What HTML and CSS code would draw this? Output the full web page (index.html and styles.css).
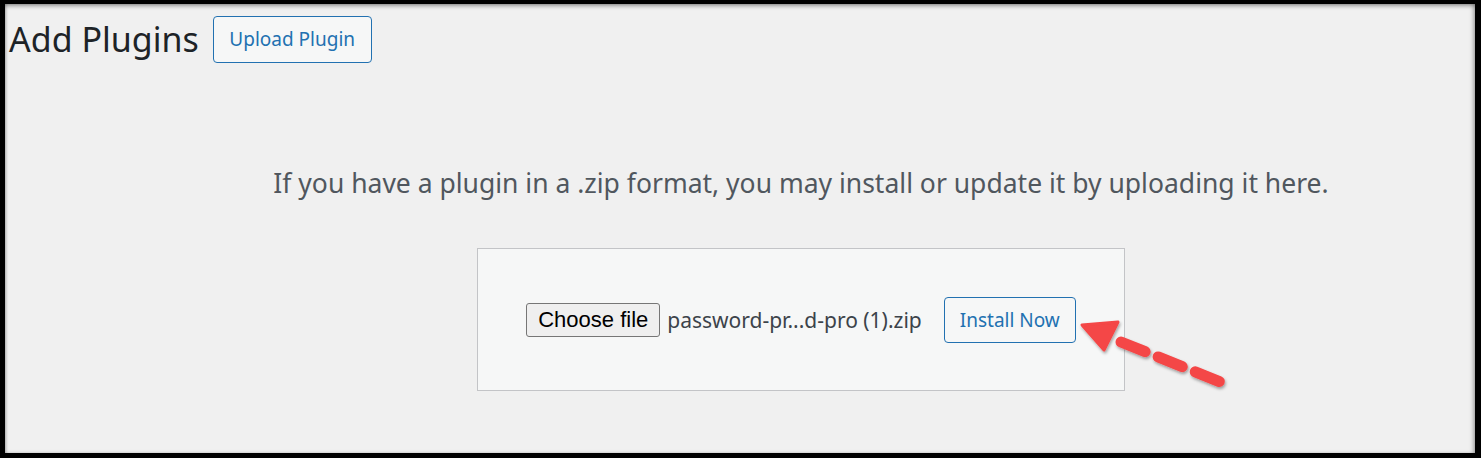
FILE: index.html
```html
<!DOCTYPE html>
<html>
<head>
<meta charset="utf-8">
<link rel="stylesheet" href="styles.css">
</head>
<body>
<div class="frame">
  <div class="header">
    <h1 class="title">Add Plugins</h1>
    <button class="wp-btn upload-btn">Upload Plugin</button>
  </div>
  <div class="upload-area">
    <p class="install-help">If you have a plugin in a .zip format, you may install or update it by uploading it here.</p>
    <div class="upload-box">
      <button class="file-btn">Choose file</button>
      <span class="file-name">password-pr...d-pro (1).zip</span>
      <button class="wp-btn install-btn">Install Now</button>
    </div>
  </div>
  <svg class="arrow" width="170" height="90" viewBox="0 0 170 90">
    <defs>
      <filter id="sh" x="-20%" y="-20%" width="140%" height="140%">
        <feDropShadow dx="1" dy="2" stdDeviation="1.5" flood-color="#000" flood-opacity="0.35"/>
      </filter>
    </defs>
    <g filter="url(#sh)">
      <line x1="42" y1="41" x2="149" y2="84" stroke="#f44646" stroke-width="11" stroke-linecap="round" stroke-dasharray="26 14"/>
      <polygon points="3,24 39,21 25,49" fill="#f44646" stroke="#f44646" stroke-width="3" stroke-linejoin="round"/>
    </g>
  </svg>
</div>
</body>
</html>
```

FILE: styles.css
```css
html, body {
  margin: 0;
  padding: 0;
  background: #000;
  height: 458px;
  overflow: hidden;
}
.frame {
  position: relative;
  margin: 4px 6px 0 5px;
  height: 449px;
  background: #f0f0f0;
  box-shadow: inset 0 3px 4px -1px rgba(0,0,0,0.35), inset -3px 0 4px -1px rgba(0,0,0,0.25), inset 2px 0 3px -1px rgba(0,0,0,0.2);
  font-family: "Noto Sans", "Open Sans", sans-serif;
}
.header {
  display: flex;
  align-items: center;
  padding: 11px 0 0 4px;
  gap: 14px;
}
.title {
  margin: 0;
  font-weight: 400;
  font-size: 34px;
  color: #1d2327;
  line-height: 48px;
}
.wp-btn {
  font-family: "Noto Sans", "Open Sans", sans-serif;
  background: #f6f7f7;
  border: 1px solid #2271b1;
  border-radius: 4px;
  color: #2271b1;
  font-size: 19px;
  padding: 0 16px;
  white-space: nowrap;
}
.upload-btn {
  height: 47px;
  width: 159px;
  padding: 0;
}
.upload-area {
  padding-left: 122px;
  text-align: center;
}
.install-help {
  margin: 96px 0 0;
  font-size: 26.5px;
  color: #50575e;
  line-height: 48px;
  white-space: nowrap;
}
.upload-box {
  display: inline-flex;
  align-items: center;
  margin-top: 41px;
  padding: 0 48px;
  height: 141px;
  background: #f6f7f7;
  border: 1px solid #c3c4c7;
}
.file-btn {
  font-family: "Liberation Sans", Arial, sans-serif;
  font-size: 22px;
  color: #000;
  background: #efefef;
  border: 1px solid #767676;
  border-radius: 3px;
  height: 34px;
  width: 134px;
  padding: 0;
}
.file-name {
  margin-left: 7px;
  font-size: 21px;
  color: #3c434a;
  white-space: nowrap;
}
.install-btn {
  margin-left: 22px;
  height: 46px;
  width: 132px;
  padding: 0;
}
.arrow {
  position: absolute;
  left: 1074px;
  top: 297px;
  overflow: visible;
}
```
